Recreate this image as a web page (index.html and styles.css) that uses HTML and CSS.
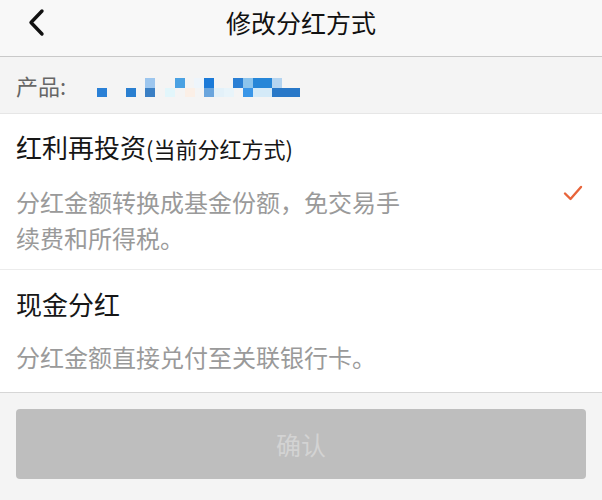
FILE: index.html
```html
<!DOCTYPE html>
<html lang="zh-CN">
<head>
<meta charset="utf-8">
<title>修改分红方式</title>
<link rel="stylesheet" href="styles.css">
</head>
<body>
<div class="page">
  <header class="header">
    <span class="back">
      <svg width="20" height="30" viewBox="0 0 20 30"><polyline points="15,3 4,14.5 15,26" fill="none" stroke="#111" stroke-width="3.4" stroke-linecap="round" stroke-linejoin="round"/></svg>
    </span>
    <h1 class="title">修改分红方式</h1>
  </header>
  <div class="product">
    <span class="label">产品:</span>
    <svg class="mosaic" width="210" height="22" viewBox="0 0 210 22">
      <rect x="0" y="11" width="10" height="9" fill="#2a80d6"/>
      <rect x="29" y="11" width="10" height="9" fill="#2a7fd0"/>
      <rect x="48" y="1" width="10" height="10" fill="#9dc6ee"/>
      <rect x="48" y="11" width="10" height="9" fill="#3a7fc4"/>
      <rect x="68" y="11" width="10" height="9" fill="#e2f6fb"/>
      <rect x="78" y="1" width="10" height="10" fill="#4aa1e2"/>
      <rect x="88" y="11" width="10" height="9" fill="#fbefe6"/>
      <rect x="97" y="1" width="10" height="10" fill="#eef5fb"/>
      <rect x="107" y="1" width="10" height="10" fill="#1b7ad8"/>
      <rect x="107" y="11" width="10" height="9" fill="#6aa5dd"/>
      <rect x="117" y="11" width="10" height="9" fill="#e3f1f9"/>
      <rect x="127" y="11" width="10" height="9" fill="#e8f4fa"/>
      <rect x="136" y="1" width="10" height="10" fill="#2a7fd4"/>
      <rect x="146" y="1" width="10" height="10" fill="#8cc4ec"/>
      <rect x="146" y="11" width="10" height="9" fill="#3a96e8"/>
      <rect x="156" y="1" width="19" height="10" fill="#2686d8"/>
      <rect x="156" y="11" width="19" height="9" fill="#d4eaf8"/>
      <rect x="175" y="1" width="10" height="10" fill="#b4d4f0"/>
      <rect x="175" y="11" width="28" height="9" fill="#2878c8"/>
    </svg>
  </div>
  <section class="options">
    <div class="option">
      <div class="option-text">
        <div class="option-title">红利再投资<span class="note">(当前分红方式)</span></div>
        <div class="option-desc">分红金额转换成基金份额，免交易手<br>续费和所得税。</div>
      </div>
      <svg class="check" width="20" height="18" viewBox="0 0 20 18"><polyline points="2,9.5 7.5,15 18,3" fill="none" stroke="#e8643a" stroke-width="2.4" stroke-linecap="round" stroke-linejoin="round"/></svg>
    </div>
    <div class="option option-last">
      <div class="option-text">
        <div class="option-title">现金分红</div>
        <div class="option-desc">分红金额直接兑付至关联银行卡。</div>
      </div>
    </div>
  </section>
  <div class="actions">
    <button class="confirm" type="button">确认</button>
  </div>
</div>
</body>
</html>
```

FILE: styles.css
```css
html, body {
  margin: 0;
  padding: 0;
}
body {
  background: #f4f4f4;
  font-family: "Noto Sans CJK SC", "Noto Sans", sans-serif;
  width: 602px;
  height: 500px;
  overflow: hidden;
}
.page {
  display: flex;
  flex-direction: column;
}
.header {
  position: relative;
  height: 57px;
  box-sizing: border-box;
  padding-bottom: 12px;
  display: flex;
  align-items: center;
  justify-content: center;
  background: #f8f8f8;
  border-bottom: 1px solid #c9c9c9;
}
.back {
  position: absolute;
  left: 27px;
  top: 8px;
  display: flex;
}
.title {
  margin: 0;
  font-size: 25px;
  font-weight: 400;
  color: #111;
  line-height: 36px;
}
.product {
  height: 56px;
  display: flex;
  align-items: center;
  padding-left: 16px;
  background: #f4f4f4;
  border-bottom: 1px solid #e6e6e6;
}
.label {
  width: 81px;
  font-size: 22px;
  color: #666;
  line-height: 30px;
}
.mosaic {
  margin-top: 6px;
}
.options {
  background: #fff;
  border-bottom: 1px solid #d6d6d6;
}
.option {
  display: flex;
  align-items: center;
  padding: 15px 19px 13px 16px;
  border-bottom: 1px solid #ececec;
}
.option-last {
  border-bottom: none;
  padding-top: 16px;
  padding-bottom: 17px;
}
.option-text {
  flex: 1;
}
.option-title {
  font-size: 26px;
  line-height: 36px;
  color: #161616;
}
.note {
  font-size: 22px;
}
.option-desc {
  margin-top: 18px;
  font-size: 24px;
  line-height: 36px;
  color: #9a9a9a;
}
.option-last .option-desc {
  margin-top: 17px;
}
.actions {
  padding: 16px 16px 0 16px;
}
.confirm {
  width: 100%;
  height: 70px;
  border: none;
  border-radius: 4px;
  background: #bebebe;
  color: #d3d3d3;
  font-family: "Noto Sans CJK SC", "Noto Sans", sans-serif;
  font-size: 25px;
  padding: 0;
}
```
